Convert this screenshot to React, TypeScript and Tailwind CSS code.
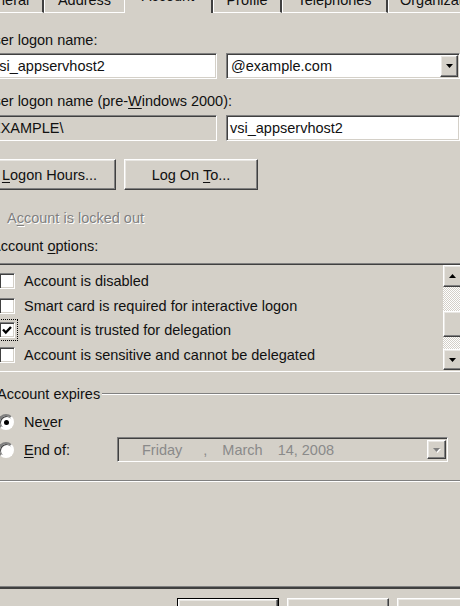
import type { ReactNode } from 'react';

// classic 3D edges
const sunken =
  'border border-t-[#808080] border-l-[#808080] border-b-white border-r-white shadow-[inset_1px_1px_0_#404040,inset_-1px_-1px_0_#d4d0c8]';
const raised =
  'border border-t-white border-l-white border-r-[#404040] border-b-[#404040] shadow-[inset_-1px_-1px_0_#808080,inset_1px_1px_0_#e9e7e3]';
const dither = 'bg-[repeating-conic-gradient(#ffffff_0_25%,#d4d0c8_0_50%)] bg-[length:2px_2px]';

function Tab({ label, width, active, start, noEdge }: { label: string; width: string; active?: boolean; start?: boolean; noEdge?: boolean }) {
  return (
    <div
      className={`${width} h-full shrink-0 flex overflow-hidden border-l border-l-white ${
        noEdge ? '' : 'border-r-2 border-r-[#404040]'
      } ${active ? '' : 'border-b border-b-white'} ${start ? 'justify-start pl-[11px]' : 'justify-center'}`}
    >
      <span className={`whitespace-nowrap leading-[14px] ${active ? '-mt-[11px]' : '-mt-[7px]'}`}>{label}</span>
    </div>
  );
}

function Arrow({ down = true, disabled }: { down?: boolean; disabled?: boolean }) {
  return (
    <svg width="9" height="6" viewBox="0 0 9 6" className={disabled ? 'drop-shadow-[1px_1px_0_#ffffff]' : ''}>
      <polygon
        points={down ? '1,1 8,1 4.5,5' : '1,5 8,5 4.5,1'}
        fill={disabled ? '#808080' : '#000000'}
      />
    </svg>
  );
}

function Checkbox({ checked, disabled }: { checked?: boolean; disabled?: boolean }) {
  return (
    <span className={`w-4 h-4 shrink-0 flex items-center justify-center ${sunken} ${disabled ? 'bg-[#d4d0c8]' : 'bg-white'}`}>
      {checked && (
        <svg width="12" height="12" viewBox="0 0 12 12">
          <path d="M2 5.5 L4.8 8.5 L10 3" stroke="#000" strokeWidth="2.4" fill="none" />
        </svg>
      )}
    </span>
  );
}

function Radio({ on }: { on?: boolean }) {
  return (
    <span className="w-4 h-4 shrink-0 rounded-full bg-white border-2 border-t-[#808080] border-l-[#808080] border-r-white border-b-white flex items-center justify-center shadow-[inset_1px_1px_0_#404040]">
      {on && <span className="w-[5px] h-[5px] rounded-full bg-black" />}
    </span>
  );
}

function Button({ children, width, isDefault }: { children: ReactNode; width: string; isDefault?: boolean }) {
  const face = (
    <div className={`h-full w-full flex items-center justify-center bg-[#d4d0c8] ${raised}`}>{children}</div>
  );
  return (
    <div className={`${width} h-[31px] shrink-0 ${isDefault ? 'border border-black' : ''}`}>{face}</div>
  );
}

const options = [
  { label: 'Account is disabled' },
  { label: 'Smart card is required for interactive logon' },
  { label: 'Account is trusted for delegation', checked: true, focus: true },
  { label: 'Account is sensitive and cannot be delegated' },
];

export default function App() {
  return (
    <div className="w-[460px] h-[606px] overflow-hidden bg-[#d4d0c8] font-['Liberation_Sans',Arial,sans-serif] text-[14.5px] leading-4 text-[#111] flex flex-col [&>*]:shrink-0">
      {/* property sheet tabs */}
      <div className="flex h-[13px] -ml-[36px]">
        <Tab label="General" width="w-[80px]" />
        <Tab label="Address" width="w-[80px]" noEdge />
        <Tab label="Account" width="w-[89px]" active />
        <Tab label="Profile" width="w-[69px]" />
        <Tab label="Telephones" width="w-[106px]" />
        <Tab label="Organization" width="w-[110px]" start />
      </div>

      <div className="mt-[19px] -ml-[17px] whitespace-nowrap">
        <u className="underline-offset-2">U</u>ser logon name:
      </div>
      <div className="mt-[5px] -ml-[12px] flex h-[26px] gap-[9px]">
        <div className={`w-[231px] bg-white flex items-center pl-[3px] ${sunken}`}>vsi_appservhost2</div>
        <div className={`w-[236px] bg-white flex items-center pl-[4px] ${sunken}`}>
          <span className="flex-1">@example.com</span>
          <span className={`w-[18px] self-stretch my-[1px] mr-[1px] flex items-center justify-center bg-[#d4d0c8] ${raised}`}>
            <Arrow />
          </span>
        </div>
      </div>

      <div className="mt-[14px] -ml-[17px] whitespace-nowrap">
        User logon name (pre-<u className="underline-offset-2">W</u>indows 2000):
      </div>
      <div className="mt-[6px] -ml-[12px] flex h-[26px] gap-[9px]">
        <div className={`w-[231px] bg-[#d4d0c8] flex items-center pl-[2px] ${sunken}`}>EXAMPLE\</div>
        <div className={`w-[236px] bg-white flex items-center pl-[3px] ${sunken}`}>vsi_appservhost2</div>
      </div>

      <div className="mt-[18px] -ml-[17px] flex gap-[8px]">
        <Button width="w-[133px]">
          <span>
            <u className="underline-offset-2">L</u>ogon Hours...
          </span>
        </Button>
        <Button width="w-[134px]">
          <span>
            Log On <u className="underline-offset-2">T</u>o...
          </span>
        </Button>
      </div>

      <div className="mt-[20px] -ml-[17px] flex items-center gap-[8px] h-4">
        <Checkbox disabled />
        <span className="text-[#808080] [text-shadow:1px_1px_0_#ffffff]">
          A<u className="underline-offset-2">c</u>count is locked out
        </span>
      </div>

      <div className="mt-[12px] -ml-[9px] whitespace-nowrap">
        Account <u className="underline-offset-2">o</u>ptions:
      </div>

      {/* option list with its scroll bar */}
      <div className={`mt-[9px] -ml-[20px] w-[484px] h-[109px] flex bg-[#d4d0c8] ${sunken}`}>
        <div className="flex-1 pt-[4.75px] pl-[18px]">
          {options.map((o) => (
            <div key={o.label} className="h-[24.5px] flex items-center gap-[9px] whitespace-nowrap">
              <span className={o.focus ? 'outline-1 outline-dotted outline-black outline-offset-2' : ''}>
                <Checkbox checked={o.checked} />
              </span>
              <span>{o.label}</span>
            </div>
          ))}
        </div>
        <div className="w-[19px] mr-[1px] my-[1px] flex flex-col">
          <div className={`h-[22px] flex items-center justify-center bg-[#d4d0c8] ${raised}`}>
            <Arrow down={false} />
          </div>
          <div className={`h-[24px] ${dither}`} />
          <div className={`h-[26px] bg-[#d4d0c8] ${raised}`} />
          <div className={`h-[12px] ${dither}`} />
          <div className={`flex-1 flex items-center justify-center bg-[#d4d0c8] ${raised}`}>
            <Arrow />
          </div>
        </div>
      </div>

      {/* Account expires group */}
      <div className="mt-[14px] -ml-[3px] h-4 flex items-center whitespace-nowrap">
        <span>Account expires</span>
        <span className="flex-1 ml-[2px] border-t border-t-[#808080] border-b border-b-white" />
      </div>
      <div className="mt-[12px] -ml-[2px] h-4 flex items-center gap-[10px]">
        <Radio on />
        <span>
          Ne<u className="underline-offset-2">v</u>er
        </span>
      </div>
      <div className="mt-[7px] -ml-[2px] h-[25px] flex items-center">
        <div className="w-[119px] flex items-center gap-[10px]">
          <Radio />
          <span>
            <u className="underline-offset-2">E</u>nd of:
          </span>
        </div>
        <div className={`w-[331px] h-[25px] flex items-center bg-[#d4d0c8] text-[#8a8a8a] ${sunken}`}>
          <span className="ml-[24px]">Friday</span>
          <span className="ml-[21px]">,</span>
          <span className="ml-[15px]">March</span>
          <span className="ml-[15px]">14, 2008</span>
          <span className={`ml-auto w-[19px] h-[19px] mr-[1px] flex items-center justify-center bg-[#d4d0c8] ${raised}`}>
            <Arrow disabled />
          </span>
        </div>
      </div>
      <div className="mt-[18px] border-t border-t-[#808080] border-b border-b-white" />

      {/* bottom edge of the tab page */}
      <div className="mt-[104px] h-px bg-[#808080]" />
      <div className="h-[2px] bg-[#404040]" />

      <div className="mt-[9px] ml-[177px] flex gap-[8px]">
        <Button width="w-[102px]" isDefault>
          OK
        </Button>
        <Button width="w-[102px]">Cancel</Button>
        <Button width="w-[102px]">Apply</Button>
      </div>
    </div>
  );
}
